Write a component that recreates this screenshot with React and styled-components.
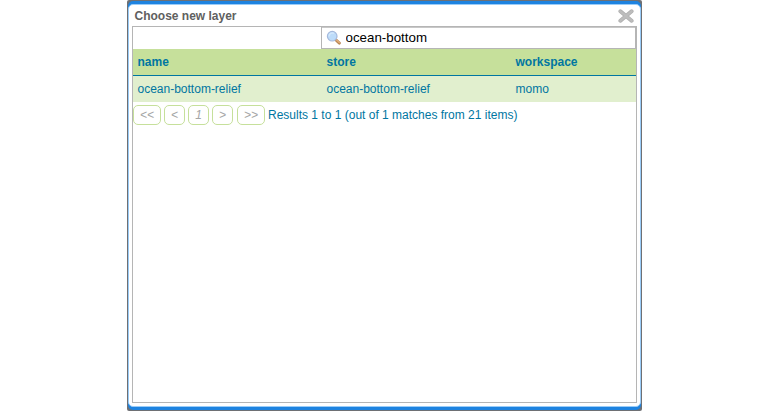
import React from 'react';
import styled, { createGlobalStyle } from 'styled-components';

const GlobalStyle = createGlobalStyle`
  *, *::before, *::after { box-sizing: border-box; }
  body {
    margin: 0;
    background: #fff;
    overflow: hidden;
    font-family: "Liberation Sans", Arial, sans-serif;
  }
`;

const Page = styled.main`
  width: 770px;
  height: 411px;
  padding-left: 127px;
`;

const Frame = styled.section`
  width: 515px;
  height: 411px;
  padding: 1px 1px 1px 0.5px;
  background: #6e7074;
  border-radius: 2px;
`;

const Accent = styled.div`
  height: 409px;
  padding: 3px 0.5px;
  background: #1e83e0;
  border-radius: 5px;
`;

const Dialog = styled.div`
  display: flex;
  flex-direction: column;
  height: 403px;
  padding: 0 3.5px 3px 3px;
  background: #fff;
  border: 1px solid #9accf8;
  border-radius: 5px;
`;

const TitleBar = styled.header`
  display: flex;
  justify-content: space-between;
  align-items: flex-start;
  flex: 0 0 21px;
  padding: 3px 2.5px 0 2.5px;
`;

const Title = styled.h1`
  margin: 0;
  font-size: 12px;
  line-height: 16px;
  font-weight: bold;
  color: #606060;
`;

const CloseButton = styled.button`
  display: block;
  width: 16px;
  height: 16px;
  padding: 0;
  border: 0;
  background: none;
`;

const Content = styled.div`
  flex: 1;
  width: 505px;
  border: 1px solid #b5b5b5;
`;

const SearchRow = styled.div`
  display: flex;
  justify-content: flex-end;
  height: 22px;
`;

const SearchBox = styled.label`
  display: flex;
  align-items: center;
  width: 315px;
  height: 23px;
  margin: -1px 0 0;
  padding: 0 5px 0 4px;
  border: 1px solid #b5b5b5;
  box-shadow: inset 0 1px #c8c8c8;
  background: #fff;
`;

const SearchInput = styled.input`
  width: 280px;
  margin-left: 3.5px;
  padding: 0;
  border: 0;
  outline: 0;
  background: transparent;
  font: 13.333px "Liberation Sans", Arial, sans-serif;
  color: #000;
`;

const LayerTable = styled.table`
  width: 100%;
  border-collapse: separate;
  border-spacing: 0;
  table-layout: fixed;
  font-size: 12px;
  line-height: 16px;
  color: #0076a1;
  text-align: left;
`;

const HeadCell = styled.th`
  width: ${({ $width }) => $width};
  height: 27px;
  padding: 0 4.5px;
  border-bottom: 1px solid #0076a1;
  background: #c6e09b;
`;

const Cell = styled.td`
  height: 26px;
  padding: 0 4.5px;
  background: #e1efce;
`;

const Pager = styled.nav`
  display: flex;
  align-items: center;
  height: 20px;
  margin-top: 3px;
  font-size: 12px;
  color: #0076a1;
  white-space: nowrap;
`;

const PageButton = styled.span`
  width: ${({ $width }) => $width}px;
  height: 20px;
  margin-right: ${({ $gap = 3 }) => $gap}px;
  border: 1px solid #c6e09b;
  border-radius: 5px;
  line-height: 18px;
  text-align: center;
  font-style: italic;
  color: #a5a5a5;
`;

const Icon = styled.svg`
  display: block;
  flex: none;
`;

function CloseIcon() {
  return (
    <Icon width="16" height="16" viewBox="0 0 16 16" fill="none">
      <path d="M2.4 3.3 13.6 12.7M13.6 3.3 2.4 12.7" stroke="#b0b0b0" strokeWidth="4" strokeLinecap="round" />
      <path d="M2.4 3.3 13.6 12.7M13.6 3.3 2.4 12.7" stroke="#bdbdbd" strokeWidth="2.4" strokeLinecap="round" />
    </Icon>
  );
}

function SearchIcon() {
  return (
    <Icon width="16" height="16" viewBox="0 0 16 16" fill="none">
      <path d="m10.4 10.4 3 2.7" stroke="#b98755" strokeWidth="3" strokeLinecap="round" />
      <path d="m10.6 10 2.7 2.4" stroke="#dfaa76" strokeWidth="1.5" strokeLinecap="round" />
      <circle cx="6.2" cy="6.2" r="4.8" fill="#bddcfa" stroke="#a5b9dc" strokeWidth="1.2" />
      <path d="M3.2 6.4a3.2 3.2 0 0 1 4.8-3" stroke="#d3e8fc" strokeWidth="1.5" />
    </Icon>
  );
}

const columns = [
  { name: 'name', width: '189px' },
  { name: 'store', width: '189px' },
  { name: 'workspace', width: 'auto' },
];

const pages = [
  { label: '<<', width: 28 },
  { label: '<', width: 21 },
  { label: '1', width: 21 },
  { label: '>', width: 21, gap: 4 },
  { label: '>>', width: 28 },
];

export default function App() {
  return (
    <>
      <GlobalStyle />
      <Page>
        <Frame>
          <Accent>
            <Dialog>
              <TitleBar>
                <Title>Choose new layer</Title>
                <CloseButton aria-label="Close"><CloseIcon /></CloseButton>
              </TitleBar>
              <Content>
                <SearchRow>
                  <SearchBox>
                    <SearchIcon />
                    <SearchInput defaultValue="ocean-bottom" />
                  </SearchBox>
                </SearchRow>
                <LayerTable>
                  <thead>
                    <tr>
                      {columns.map((column) => (
                        <HeadCell key={column.name} $width={column.width}>{column.name}</HeadCell>
                      ))}
                    </tr>
                  </thead>
                  <tbody>
                    <tr>
                      <Cell>ocean-bottom-relief</Cell>
                      <Cell>ocean-bottom-relief</Cell>
                      <Cell>momo</Cell>
                    </tr>
                  </tbody>
                </LayerTable>
                <Pager>
                  {pages.map((page) => (
                    <PageButton key={page.label} $width={page.width} $gap={page.gap}>{page.label}</PageButton>
                  ))}
                  <span>Results 1 to 1 (out of 1 matches from 21 items)</span>
                </Pager>
              </Content>
            </Dialog>
          </Accent>
        </Frame>
      </Page>
    </>
  );
}
